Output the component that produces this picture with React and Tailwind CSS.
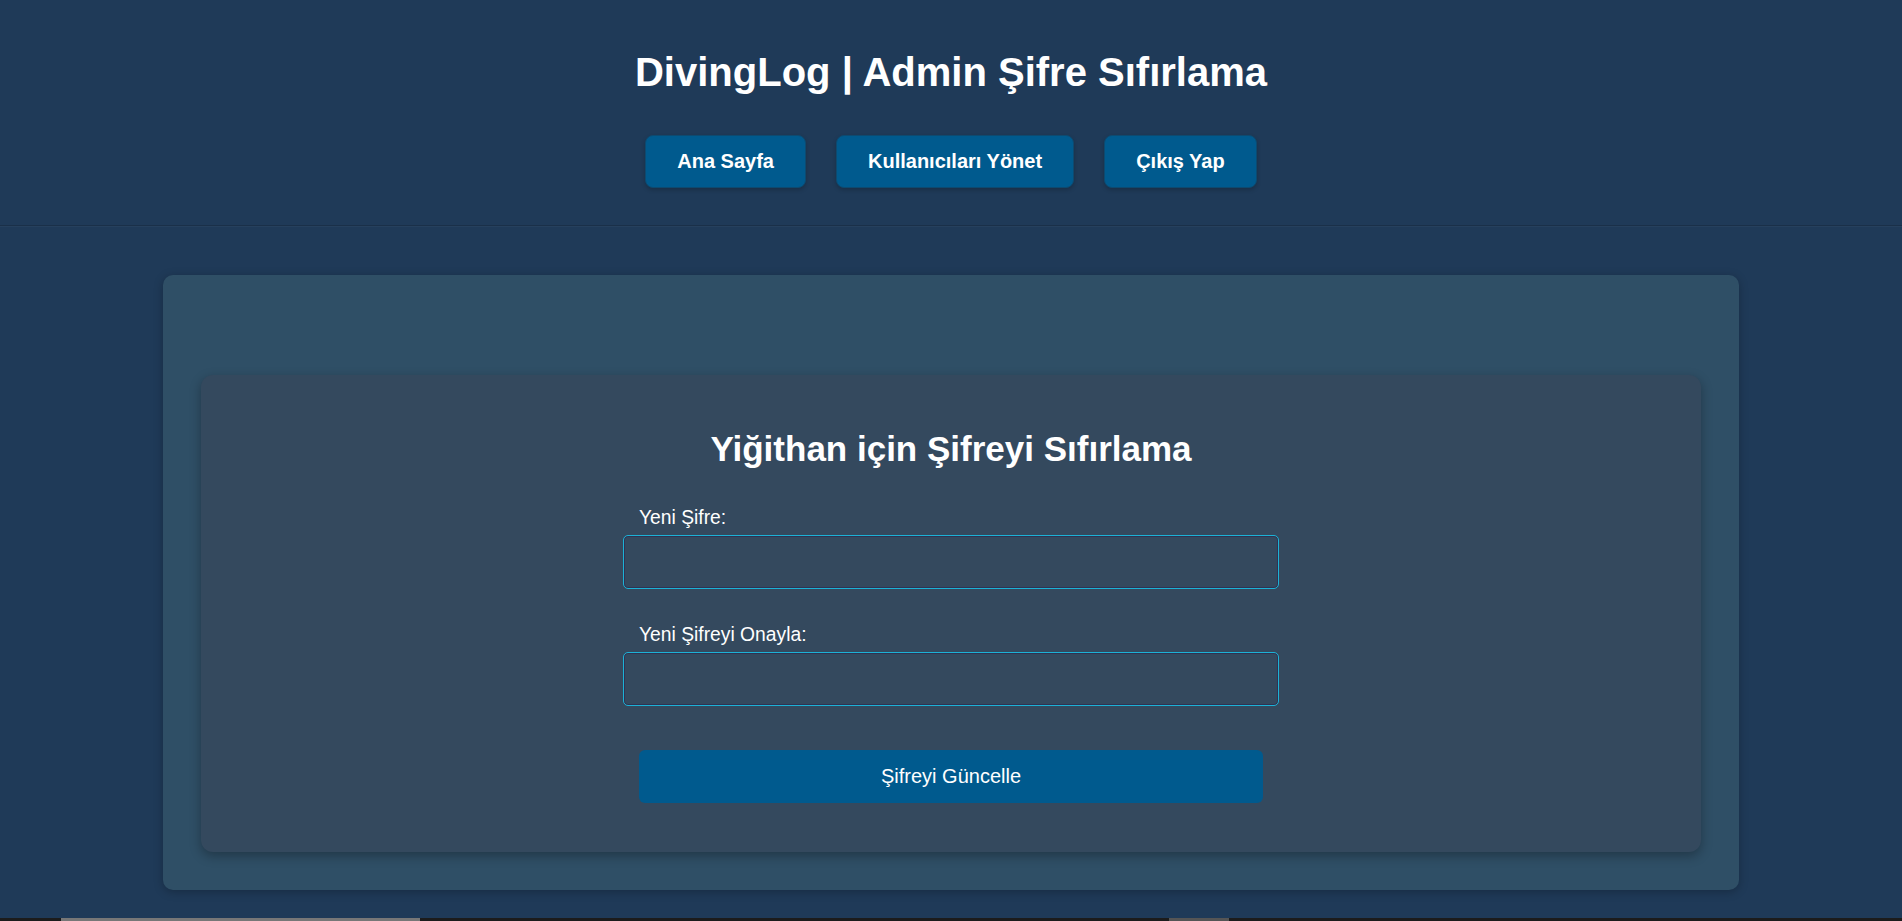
const navLinks = ['Ana Sayfa', 'Kullanıcıları Yönet', 'Çıkış Yap']

function NavButton({ children }) {
  return (
    <a
      href="#"
      className="block rounded-[8px] border border-[#0d4a70] bg-[#005a8e] px-[31px] py-[14px] text-[20px] font-bold leading-[23px] text-white shadow-[0_2px_4px_rgba(0,0,0,0.2)]"
    >
      {children}
    </a>
  )
}

function Field({ label, className = '' }) {
  return (
    <div className={`flex flex-col ${className}`}>
      <label className="mb-[6px] px-[16px] text-[19.3px] leading-[23px] text-white">{label}</label>
      <input
        type="password"
        className="h-[54px] w-full rounded-[5px] border border-[#1cb2d6] bg-transparent px-3 text-white shadow-[inset_0_0_0_1px_rgba(45,35,75,0.6)] focus:outline-none"
      />
    </div>
  )
}

export default function App() {
  return (
    <div className="flex min-h-[921px] flex-col bg-[#1f3a58] font-['Liberation_Sans',Arial,sans-serif]">
      <header className="flex flex-col items-center border-b border-[#1a3049] pb-[37px] pt-[49px] shadow-[0_1px_0_rgba(255,255,255,0.03)]">
        <h1 className="text-[40px] font-bold leading-[46px] text-white">DivingLog | Admin Şifre Sıfırlama</h1>
        <nav className="mt-[40px] flex gap-[30px]">
          {navLinks.map(l => (
            <NavButton key={l}>{l}</NavButton>
          ))}
        </nav>
      </header>

      <main className="mx-[163px] mt-[49px] rounded-[10px] bg-[#2f4f66] px-[38px] pb-[38px] pt-[100px] shadow-[0_2px_10px_rgba(0,0,0,0.25)]">
        <section className="flex flex-col items-center rounded-[12px] bg-[#34495e] pb-[49px] pt-[54px] shadow-[0_4px_12px_rgba(0,0,0,0.3)]">
          <h2 className="text-[35px] font-bold leading-[40px] text-white">Yiğithan için Şifreyi Sıfırlama</h2>
          <form className="mt-[37px] flex w-[656px] flex-col" onSubmit={e => e.preventDefault()}>
            <Field label="Yeni Şifre:" />
            <Field label="Yeni Şifreyi Onayla:" className="mt-[34px]" />
            <button
              type="submit"
              className="mx-[16px] mt-[44px] h-[53px] rounded-[6px] bg-[#005a8e] text-[20px] leading-[23px] text-white"
            >
              Şifreyi Güncelle
            </button>
          </form>
        </section>
      </main>

      <div className="mt-auto flex h-[3px] bg-[#1c1c1c]">
        <div className="ml-[61px] w-[359px] bg-[#777]" />
        <div className="ml-[749px] w-[60px] bg-[#555]" />
      </div>
    </div>
  )
}
